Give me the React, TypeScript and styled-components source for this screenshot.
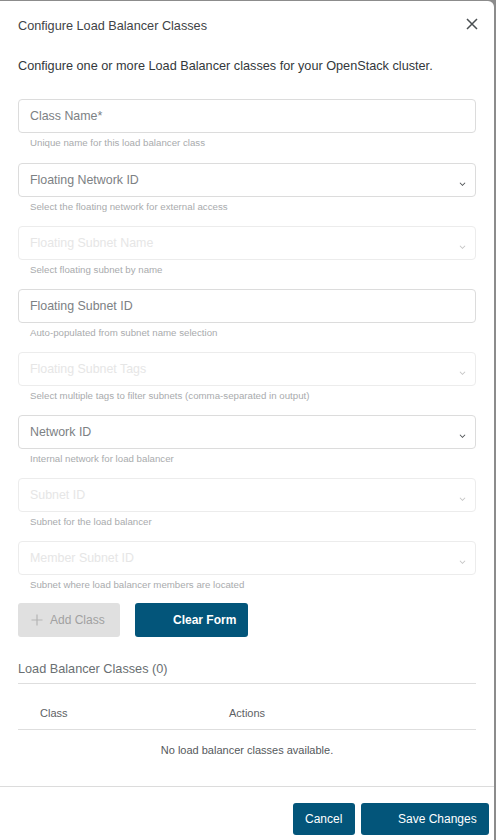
import React from "react";
import styled, { createGlobalStyle } from "styled-components";

const Global = createGlobalStyle`
  html, body { margin: 0; padding: 0; }
  body {
    background: #8c8c8c;
    font-family: "Liberation Sans", Arial, Helvetica, sans-serif;
    -webkit-font-smoothing: antialiased;
  }
  * { box-sizing: border-box; }
`;

const Page = styled.div`
  width: 496px;
  height: 840px;
  padding-top: 1px;
  overflow: hidden;
`;

const Modal = styled.div`
  width: 494px;
  height: 839px;
  background: #fff;
  border-top-right-radius: 6px;
  display: flex;
  flex-direction: column;
`;

const Header = styled.div`
  height: 50px;
  padding: 0 15px 0 18px;
  display: flex;
  align-items: center;
  justify-content: space-between;
`;

const Title = styled.h2`
  margin: 0;
  font-size: 12.7px;
  font-weight: 400;
  color: #3f4447;
`;

const CloseButton = styled.button`
  border: none;
  background: none;
  padding: 0;
  width: 14px;
  height: 14px;
  display: flex;
  align-items: center;
  justify-content: center;
  cursor: pointer;
  color: #4a4f52;
  margin-top: -4px;
`;

const Body = styled.div`
  flex: 1;
  padding: 5px 18px 0;
  display: flex;
  flex-direction: column;
`;

const Description = styled.p`
  margin: 0 0 23px;
  line-height: 20px;
  font-size: 12.7px;
  color: #33383b;
`;

const Field = styled.div<{ $first?: boolean }>`
  display: flex;
  flex-direction: column;
  margin-bottom: ${(p) => (p.$first ? 13 : 12)}px;
`;

const Box = styled.div<{ $disabled?: boolean }>`
  height: 34px;
  border: 1px solid ${(p) => (p.$disabled ? "#ececec" : "#dcdcdc")};
  border-radius: 4px;
  padding: 0 9px 0 11px;
  display: flex;
  align-items: center;
  justify-content: space-between;
  font-size: 12.4px;
  color: ${(p) => (p.$disabled ? "#e6e6e6" : "#7d8184")};
`;

const Chevron = styled.svg<{ $disabled?: boolean }>`
  width: 7px;
  height: 5px;
  margin-top: 8px;
  color: ${(p) => (p.$disabled ? "#c4c4c4" : "#4b4f52")};
`;

const Helper = styled.div`
  margin-top: 3px;
  padding-left: 12px;
  height: 14px;
  line-height: 14px;
  font-size: 9.7px;
  color: #a9abad;
`;

const ButtonRow = styled.div`
  display: flex;
  gap: 15px;
  margin-top: -1px;
`;

const Button = styled.button<{ $variant: "primary" | "disabled"; $lead?: number; $w: number }>`
  width: ${(p) => p.$w}px;
  height: 34px;
  border: none;
  border-radius: 3px;
  font-family: inherit;
  font-size: 12px;
  display: flex;
  align-items: center;
  gap: 7px;
  padding: 0 0 0 ${(p) => p.$lead ?? 12}px;
  background: ${(p) => (p.$variant === "primary" ? "#03557a" : "#e0e0e0")};
  color: ${(p) => (p.$variant === "primary" ? "#fff" : "#a1a1a1")};
  font-weight: ${(p) => (p.$variant === "primary" ? 700 : 400)};
`;

const SectionTitle = styled.div`
  margin-top: 23px;
  line-height: 18px;
  font-size: 12.7px;
  color: #6a6f72;
  padding-bottom: 5px;
  border-bottom: 1px solid #dedede;
`;

const Table = styled.div`
  display: grid;
  grid-template-columns: 189px 1fr;
`;

const HeadCell = styled.div`
  height: 46px;
  padding: 23px 0 0 22px;
  font-size: 11px;
  color: #5d6164;
  border-bottom: 1px solid #dedede;
`;

const EmptyCell = styled.div`
  grid-column: 1 / -1;
  text-align: center;
  padding-top: 14px;
  font-size: 11px;
  color: #55595c;
`;

const Footer = styled.div`
  height: 54px;
  border-top: 1px solid #dcdcdc;
  display: flex;
  justify-content: flex-end;
  align-items: flex-start;
  gap: 6px;
  padding: 16px 5px 0 0;
`;

const FooterButton = styled.button<{ $lead?: number; $w: number }>`
  width: ${(p) => p.$w}px;
  height: 32px;
  border: none;
  border-radius: 3px;
  background: #03557a;
  color: #fff;
  font-family: inherit;
  font-size: 12px;
  text-align: left;
  padding: 0 0 0 ${(p) => p.$lead ?? 12}px;
`;

const Plus = () => (
  <svg width="12" height="12" viewBox="0 0 12 12" fill="none" stroke="#b5b5b5" strokeWidth="1.2">
    <path d="M6 0.5v11M0.5 6h11" />
  </svg>
);

type FieldDef = { label: string; help: string; select?: boolean; disabled?: boolean };

const fields: FieldDef[] = [
  { label: "Class Name*", help: "Unique name for this load balancer class" },
  { label: "Floating Network ID", help: "Select the floating network for external access", select: true },
  { label: "Floating Subnet Name", help: "Select floating subnet by name", select: true, disabled: true },
  { label: "Floating Subnet ID", help: "Auto-populated from subnet name selection" },
  {
    label: "Floating Subnet Tags",
    help: "Select multiple tags to filter subnets (comma-separated in output)",
    select: true,
    disabled: true,
  },
  { label: "Network ID", help: "Internal network for load balancer", select: true },
  { label: "Subnet ID", help: "Subnet for the load balancer", select: true, disabled: true },
  { label: "Member Subnet ID", help: "Subnet where load balancer members are located", select: true, disabled: true },
];

export default function App() {
  return (
    <Page>
      <Global />
      <Modal>
        <Header>
          <Title>Configure Load Balancer Classes</Title>
          <CloseButton aria-label="Close">
            <svg width="12" height="12" viewBox="0 0 12 12" stroke="currentColor" strokeWidth="1.5" fill="none">
              <path d="M1 1l10 10M11 1L1 11" />
            </svg>
          </CloseButton>
        </Header>
        <Body>
          <Description>Configure one or more Load Balancer classes for your OpenStack cluster.</Description>
          {fields.map((f, i) => (
            <Field key={f.label} $first={i === 0}>
              <Box $disabled={f.disabled}>
                <span>{f.label}</span>
                {f.select && (
                  <Chevron $disabled={f.disabled} viewBox="0 0 8 6" fill="currentColor">
                    <path d="M0.5 1.2L4 4.8L7.5 1.2L6.7 0.6L4 3.4L1.3 0.6Z" />
                  </Chevron>
                )}
              </Box>
              <Helper>{f.help}</Helper>
            </Field>
          ))}
          <ButtonRow>
            <Button $variant="disabled" $lead={13} $w={102}>
              <Plus />
              Add Class
            </Button>
            <Button $variant="primary" $lead={38} $w={113}>
              Clear Form
            </Button>
          </ButtonRow>
          <SectionTitle>Load Balancer Classes (0)</SectionTitle>
          <Table>
            <HeadCell>Class</HeadCell>
            <HeadCell>Actions</HeadCell>
            <EmptyCell>No load balancer classes available.</EmptyCell>
          </Table>
        </Body>
        <Footer>
          <FooterButton $w={62}>Cancel</FooterButton>
          <FooterButton $lead={37} $w={128}>
            Save Changes
          </FooterButton>
        </Footer>
      </Modal>
    </Page>
  );
}
